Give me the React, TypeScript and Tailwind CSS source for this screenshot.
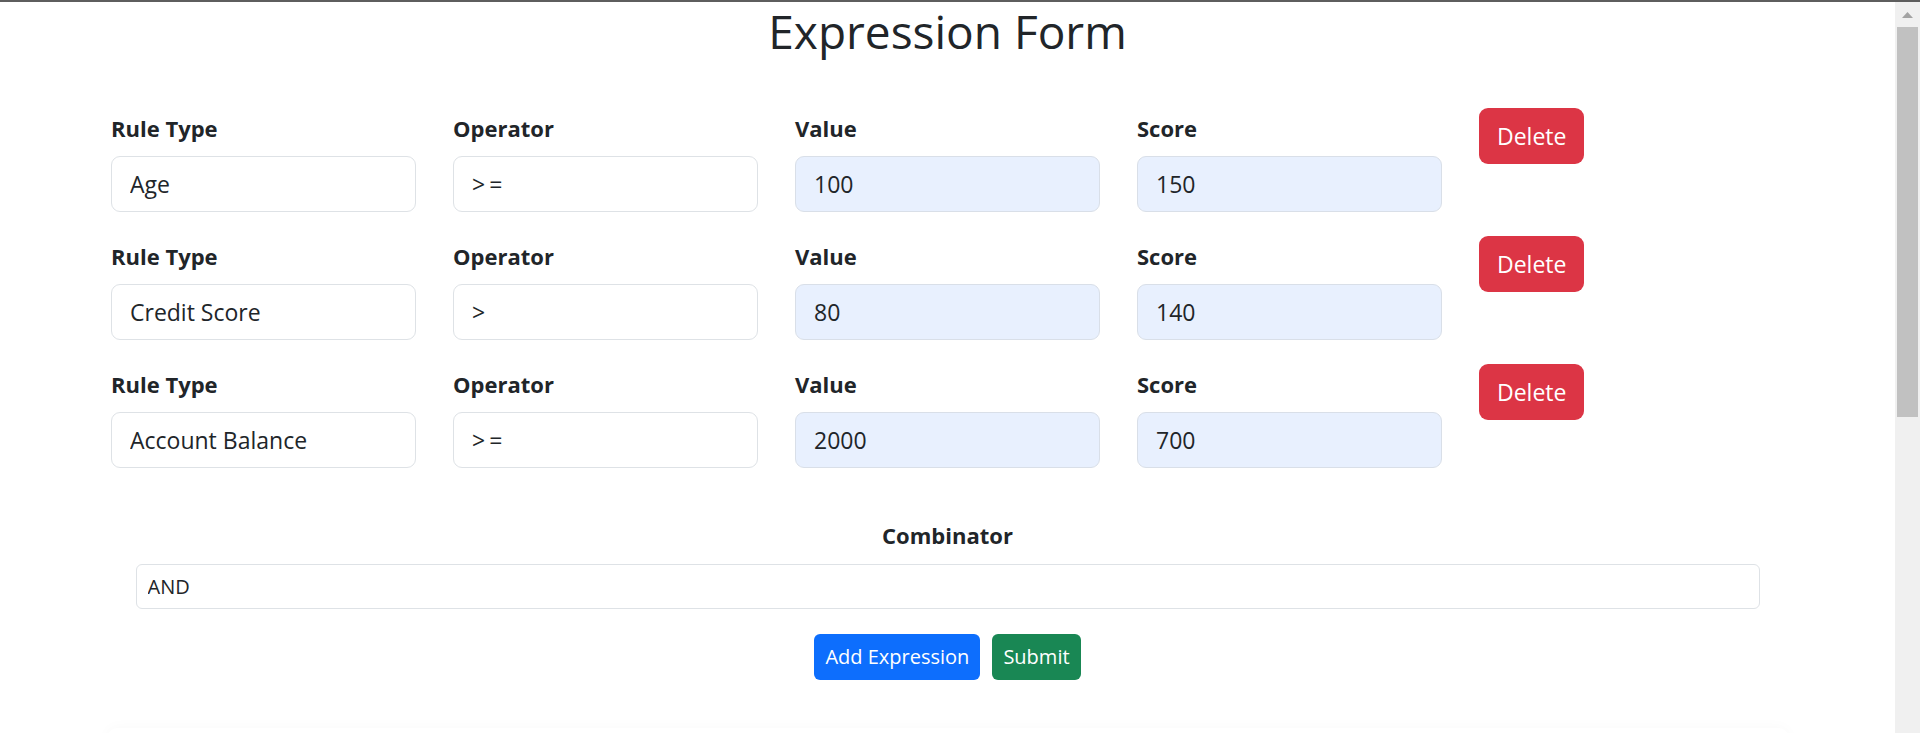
import React, { useState } from 'react';

type Rule = {
  ruleType: string;
  operator: string;
  value: string;
  score: string;
};

const initialRules: Rule[] = [
  { ruleType: 'Age', operator: '>=', value: '100', score: '150' },
  { ruleType: 'Credit Score', operator: '>', value: '80', score: '140' },
  { ruleType: 'Account Balance', operator: '>=', value: '2000', score: '700' },
];

type FieldProps = {
  label: string;
  value: string;
  filled?: boolean;
  spaced?: boolean;
  onChange: (value: string) => void;
};

const Field: React.FC<FieldProps> = ({ label, value, filled, spaced, onChange }) => (
  <div className="px-[18.5px] pt-[4px]">
    <label className="block text-[22px] font-bold leading-[32px] mb-[12px]">{label}</label>
    <input
      type="text"
      value={value}
      onChange={(e) => onChange(e.target.value)}
      className={`w-full h-[56px] px-[18px] border rounded-[9px] text-[23px] text-[#212529] outline-none ${
        filled ? 'bg-[#e8f0fe] border-[#d9dfe8]' : 'bg-white border-[#dee2e6]'
      } ${spaced ? 'tracking-[4px]' : ''}`}
    />
  </div>
);

const App: React.FC = () => {
  const [rules, setRules] = useState<Rule[]>(initialRules);
  const [combinator, setCombinator] = useState('AND');

  const updateRule = (index: number, key: keyof Rule, value: string) => {
    setRules(rules.map((r, i) => (i === index ? { ...r, [key]: value } : r)));
  };

  const deleteRule = (index: number) => {
    setRules(rules.filter((_, i) => i !== index));
  };

  const addRule = () => {
    setRules([...rules, { ruleType: '', operator: '', value: '', score: '' }]);
  };

  return (
    <div className="h-[733px] overflow-hidden flex flex-col bg-white text-[#212529] font-['Open_Sans',sans-serif]">
      <div className="h-[2px] bg-[#5e5e5e] shrink-0" />
      <div className="flex flex-1 min-h-0">
        <main className="flex-1 min-w-0 flex flex-col">
          <h1 className="text-center text-[46px] font-medium leading-[58px]">Expression Form</h1>

          <div className="w-[1710px] mx-auto mt-[48px] flex flex-col gap-[24px]">
            {rules.map((rule, index) => (
              <div key={index} className="grid grid-cols-5 items-start">
                <Field label="Rule Type" value={rule.ruleType} onChange={(v) => updateRule(index, 'ruleType', v)} />
                <Field label="Operator" value={rule.operator} spaced onChange={(v) => updateRule(index, 'operator', v)} />
                <Field label="Value" value={rule.value} filled onChange={(v) => updateRule(index, 'value', v)} />
                <Field label="Score" value={rule.score} filled onChange={(v) => updateRule(index, 'score', v)} />
                <div className="px-[18.5px]">
                  <button
                    onClick={() => deleteRule(index)}
                    className="h-[56px] px-[18px] rounded-[9px] bg-[#dc3545] text-white text-[23px]"
                  >
                    Delete
                  </button>
                </div>
              </div>
            ))}
          </div>

          <div className="mt-[51px] flex flex-col items-center">
            <label className="text-[22px] font-bold leading-[32px] mb-[13px]">Combinator</label>
            <input
              type="text"
              value={combinator}
              onChange={(e) => setCombinator(e.target.value)}
              className="w-[1624px] h-[45px] px-[11px] border border-[#dee2e6] rounded-[6px] text-[20px] outline-none"
            />
            <div className="flex gap-[12px] mt-[25px]">
              <button onClick={addRule} className="h-[46px] px-[11px] rounded-[6px] bg-[#0d6efd] text-white text-[20px]">
                Add Expression
              </button>
              <button className="h-[46px] px-[11px] rounded-[6px] bg-[#198754] text-white text-[20px]">Submit</button>
            </div>
            <div className="w-[1680px] h-[40px] mt-[48px] shrink-0 rounded-[9px] shadow-[0_0_14px_rgba(0,0,0,0.03)]" />
          </div>
        </main>

        <aside className="w-[25px] shrink-0 bg-[#f0f0f0] flex flex-col items-center pt-[10px]">
          <svg width="11" height="6" viewBox="0 0 11 6">
            <path d="M5.5 0 L11 6 L0 6 Z" fill="#a3a3a3" />
          </svg>
          <div className="w-[21px] h-[390px] mt-[9px] bg-[#c1c1c1]" />
        </aside>
      </div>
    </div>
  );
};

export default App;
